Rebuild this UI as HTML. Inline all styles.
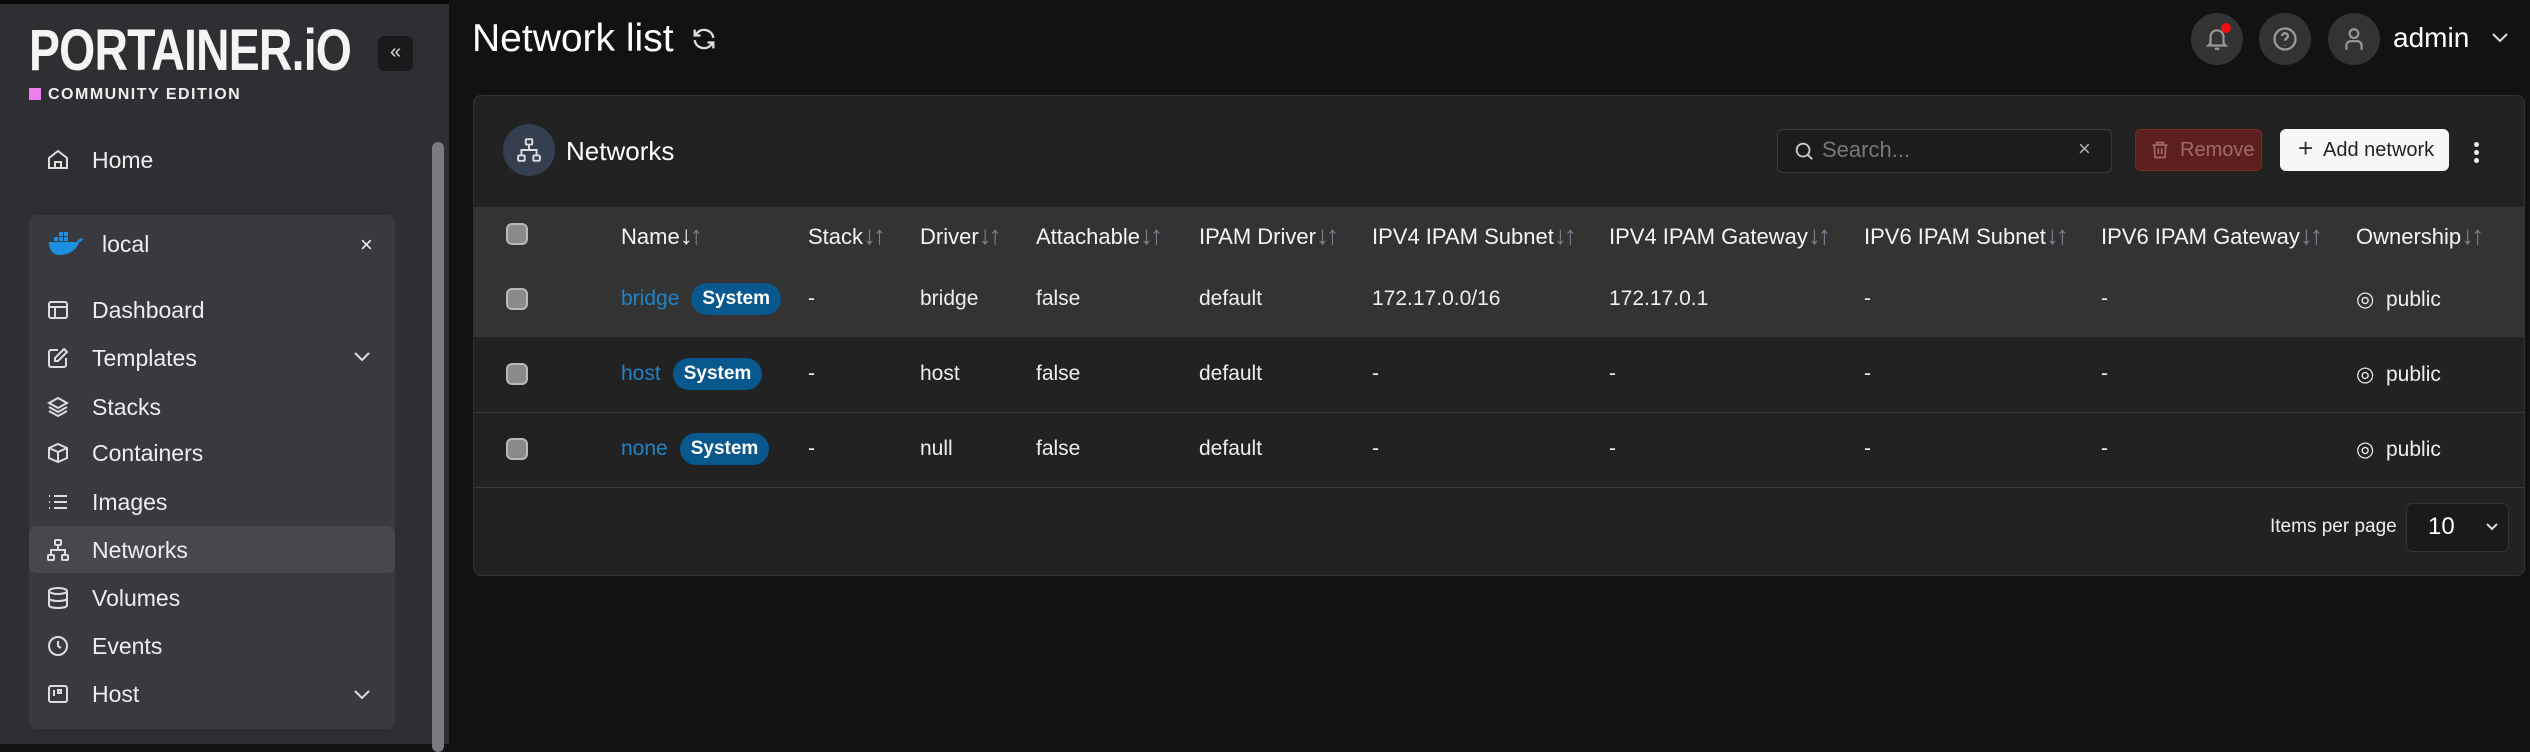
<!DOCTYPE html>
<html><head><meta charset="utf-8"><style>
*{box-sizing:border-box;margin:0;padding:0}
body{width:2530px;height:744px;background:#121212;font-family:"Liberation Sans",sans-serif;color:#f2f2f2;position:relative;overflow:hidden}
.abs{position:absolute}
#side{left:0;top:0;width:449px;height:744px;background:#2e2f33;border-top:4px solid #0a0a0a}
.logo{left:29px;top:22px;font-size:58px;line-height:1;font-weight:900;letter-spacing:-1px;color:#f4f4f2;transform:scaleX(0.8);transform-origin:left top;white-space:nowrap}
.ce{left:48px;top:86px;font-size:16px;font-weight:bold;letter-spacing:1.5px;color:#eee}
.pink{left:29px;top:88px;width:12px;height:12px;background:#f07ef0}
.coll{left:378px;top:36px;width:35px;height:35px;background:#1a1a1c;border-radius:6px;color:#ddd;font-size:20px;text-align:center;line-height:33px}
.scroll{left:432px;top:142px;width:12px;height:610px;background:#7a7b80;border-radius:6px}
.nav{left:92px;font-size:23px;color:#eee}
.ico{left:46px;width:24px;height:24px}
.env{left:29px;top:215px;width:366px;height:514px;background:#393a3f;border-radius:8px}
.hl{left:29px;top:526px;width:366px;height:47px;background:#47484d;border-radius:8px}
.card{left:473px;top:95px;width:2052px;height:481px;background:#222;border:1px solid #333;border-radius:8px}
.th{font-size:22px;color:#f4f4f4}
.ar{color:#7b8290;font-size:26px;letter-spacing:-3px}
.ar b{color:#f4f4f4;font-weight:normal}
.td{font-size:21px;color:#eee}
.cb{left:506px;width:22px;height:22px;background:#8a8a8a;border:2px solid #b9b9b9;border-radius:6px}
.nm{display:flex;align-items:center;gap:12px;font-size:21px;height:34px}
.badge{background:#08578d;color:#fff;font-weight:bold;font-size:19px;border-radius:16px;padding:0 11px;height:32px;line-height:32px}
.link{color:#1f84c8}
.circ{width:52px;height:52px;border-radius:50%;background:#333}
</style></head><body>
<div id="side" class="abs"></div>
<div class="abs logo">PORTAINER.iO</div>
<div class="abs pink"></div>
<div class="abs ce">COMMUNITY EDITION</div>
<div class="abs coll">«</div>
<div class="abs scroll"></div>
<svg class="abs ico" style="top:148px" viewBox="0 0 24 24" fill="none" stroke="#ddd" stroke-width="2"><path d="M3 10l9-7 9 7v10H3z M9 20v-6h6v6"/></svg>
<div class="abs nav" style="top:147px">Home</div>
<div class="abs env"></div>
<div class="abs hl"></div>
<svg class="abs" style="left:48px;top:230px" width="36" height="26" viewBox="0 0 36 26"><path d="M1 12h28c2-4 5-4 6-3-1 2-3 3-4 3-2 8-10 13-20 13C5 25 1 20 1 12z" fill="#1d8fe0"/><g fill="#1d8fe0"><rect x="6" y="7" width="4" height="4"/><rect x="11" y="7" width="4" height="4"/><rect x="16" y="7" width="4" height="4"/><rect x="11" y="2" width="4" height="4"/><rect x="16" y="2" width="4" height="4"/></g></svg>
<div class="abs nav" style="left:102px;top:231px">local</div>
<div class="abs" style="left:360px;top:232px;font-size:22px;color:#eee">×</div>
<svg class="abs ico" style="top:298px" viewBox="0 0 24 24" fill="none" stroke="#ddd" stroke-width="2"><rect x="3" y="4" width="18" height="16" rx="2"/><path d="M3 9h18M9 9v11"/></svg>
<div class="abs nav" style="top:297px">Dashboard</div>
<svg class="abs ico" style="top:346px" viewBox="0 0 24 24" fill="none" stroke="#ddd" stroke-width="2"><path d="M12 4H5a2 2 0 0 0-2 2v13a2 2 0 0 0 2 2h13a2 2 0 0 0 2-2v-7M18 3l3 3-9 9H9v-3z"/></svg>
<div class="abs nav" style="top:345px">Templates</div>
<svg class="abs" style="left:352px;top:350px" width="20" height="14" viewBox="0 0 20 14" fill="none" stroke="#ddd" stroke-width="2"><path d="M3 3l7 7 7-7"/></svg>
<svg class="abs ico" style="top:395px" viewBox="0 0 24 24" fill="none" stroke="#ddd" stroke-width="2"><path d="M12 3l9 5-9 5-9-5z M3 12l9 5 9-5 M3 16l9 5 9-5"/></svg>
<div class="abs nav" style="top:394px">Stacks</div>
<svg class="abs ico" style="top:441px" viewBox="0 0 24 24" fill="none" stroke="#ddd" stroke-width="2"><path d="M12 3l9 4v10l-9 4-9-4V7z M3 7l9 4 9-4 M12 11v10"/></svg>
<div class="abs nav" style="top:440px">Containers</div>
<svg class="abs ico" style="top:490px" viewBox="0 0 24 24" fill="none" stroke="#ddd" stroke-width="2"><path d="M8 6h13M8 12h13M8 18h13M3 6h1M3 12h1M3 18h1"/></svg>
<div class="abs nav" style="top:489px">Images</div>
<svg class="abs ico" style="top:538px" viewBox="0 0 24 24" fill="none" stroke="#ddd" stroke-width="2"><rect x="9" y="2" width="6" height="5" rx="1"/><rect x="2" y="17" width="6" height="5" rx="1"/><rect x="16" y="17" width="6" height="5" rx="1"/><path d="M12 7v5M5 17v-5h14v5"/></svg>
<div class="abs nav" style="top:537px">Networks</div>
<svg class="abs ico" style="top:586px" viewBox="0 0 24 24" fill="none" stroke="#ddd" stroke-width="2"><ellipse cx="12" cy="5" rx="9" ry="3"/><path d="M3 5v14c0 2 4 3 9 3s9-1 9-3V5M3 12c0 2 4 3 9 3s9-1 9-3"/></svg>
<div class="abs nav" style="top:585px">Volumes</div>
<svg class="abs ico" style="top:634px" viewBox="0 0 24 24" fill="none" stroke="#ddd" stroke-width="2"><circle cx="12" cy="12" r="9"/><path d="M12 7v5l3 2"/></svg>
<div class="abs nav" style="top:633px">Events</div>
<svg class="abs ico" style="top:682px" viewBox="0 0 24 24" fill="none" stroke="#ddd" stroke-width="2"><rect x="3" y="4" width="18" height="16" rx="2"/><path d="M8 8v6M12 8h3v3h-3z"/></svg>
<div class="abs nav" style="top:681px">Host</div>
<svg class="abs" style="left:352px;top:688px" width="20" height="14" viewBox="0 0 20 14" fill="none" stroke="#ddd" stroke-width="2"><path d="M3 3l7 7 7-7"/></svg>

<div class="abs" style="left:472px;top:17px;font-size:39px;color:#fff">Network list</div>
<svg class="abs" style="left:690px;top:25px" width="28" height="28" viewBox="0 0 24 24" fill="none" stroke="#ddd" stroke-width="2"><path d="M20 11a8 8 0 0 0-14-4L4 9M4 4v5h5M4 13a8 8 0 0 0 14 4l2-2M20 20v-5h-5"/></svg>
<div class="abs circ" style="left:2191px;top:13px"></div>
<svg class="abs" style="left:2204px;top:26px" width="26" height="26" viewBox="0 0 24 24" fill="none" stroke="#999" stroke-width="2"><path d="M6 16V10a6 6 0 0 1 12 0v6l2 2H4z M10 21h4"/></svg>
<div class="abs" style="left:2221px;top:23px;width:10px;height:10px;border-radius:50%;background:#f01010"></div>
<div class="abs circ" style="left:2259px;top:13px"></div>
<svg class="abs" style="left:2271px;top:25px" width="28" height="28" viewBox="0 0 24 24" fill="none" stroke="#999" stroke-width="2"><circle cx="12" cy="12" r="9"/><path d="M9.5 9.5a2.5 2.5 0 0 1 5 0c0 2-2.5 2-2.5 4M12 17v.5"/></svg>
<div class="abs circ" style="left:2328px;top:13px"></div>
<svg class="abs" style="left:2341px;top:26px" width="26" height="26" viewBox="0 0 24 24" fill="none" stroke="#999" stroke-width="2"><circle cx="12" cy="7" r="4"/><path d="M5 22v-4a4 4 0 0 1 4-4h6a4 4 0 0 1 4 4v4"/></svg>
<div class="abs" style="left:2393px;top:22px;font-size:28px;color:#fff">admin</div>
<svg class="abs" style="left:2490px;top:30px" width="20" height="16" viewBox="0 0 20 16" fill="none" stroke="#ddd" stroke-width="2"><path d="M3 4l7 7 7-7"/></svg>

<div class="abs card"></div>
<div class="abs circ" style="left:503px;top:124px;background:#34404f"></div>
<svg class="abs" style="left:516px;top:137px" width="26" height="26" viewBox="0 0 24 24" fill="none" stroke="#ddd" stroke-width="1.8"><rect x="9" y="2" width="6" height="5" rx="1"/><rect x="2" y="17" width="6" height="5" rx="1"/><rect x="16" y="17" width="6" height="5" rx="1"/><path d="M12 7v5M5 17v-5h14v5"/></svg>
<div class="abs" style="left:566px;top:136px;font-size:26px;color:#fff">Networks</div>
<div class="abs" style="left:1777px;top:129px;width:335px;height:44px;border:1px solid #3a3a3a;border-radius:6px;background:#1c1c1c"></div>
<svg class="abs" style="left:1793px;top:140px" width="22" height="22" viewBox="0 0 24 24" fill="none" stroke="#ccc" stroke-width="2"><circle cx="11" cy="11" r="7"/><path d="M16 16l5 5"/></svg>
<div class="abs" style="left:1822px;top:137px;font-size:22px;color:#777">Search...</div>
<div class="abs" style="left:2078px;top:136px;font-size:22px;color:#aaa">×</div>
<div class="abs" style="left:2135px;top:129px;width:127px;height:42px;background:#5c1f1d;border:1px solid #7a2a27;border-radius:6px"></div>
<svg class="abs" style="left:2150px;top:139px" width="20" height="22" viewBox="0 0 24 24" fill="none" stroke="#a06a66" stroke-width="2"><path d="M3 6h18M8 6V3h8v3M5 6l1 15h12l1-15M10 10v7M14 10v7"/></svg>
<div class="abs" style="left:2180px;top:139px;font-size:20px;color:#a06a66">Remove</div>
<div class="abs" style="left:2280px;top:129px;width:169px;height:42px;background:#f7f7f5;border-radius:6px"></div>
<div class="abs" style="left:2298px;top:133px;font-size:26px;color:#333">+</div>
<div class="abs" style="left:2323px;top:139px;font-size:20px;color:#222">Add network</div>
<div class="abs" style="left:2474px;top:142px;width:5px;height:5px;background:#eee;border-radius:50%"></div>
<div class="abs" style="left:2474px;top:150px;width:5px;height:5px;background:#eee;border-radius:50%"></div>
<div class="abs" style="left:2474px;top:158px;width:5px;height:5px;background:#eee;border-radius:50%"></div>

<div class="abs" style="left:474px;top:207px;width:2050px;height:130px;background:#333"></div>
<div class="abs" style="left:474px;top:412px;width:2050px;height:1px;background:#3a3a3a"></div>
<div class="abs" style="left:474px;top:487px;width:2050px;height:1px;background:#3a3a3a"></div>

<div class="abs cb" style="top:223px"></div>
<div class="abs cb" style="top:288px"></div>
<div class="abs cb" style="top:363px"></div>
<div class="abs cb" style="top:438px"></div>

<div class="abs th" style="left:621px;top:220px">Name<span class="ar"><b>↓</b>↑</span></div>
<div class="abs th" style="left:808px;top:220px">Stack<span class="ar">↓↑</span></div>
<div class="abs th" style="left:920px;top:220px">Driver<span class="ar">↓↑</span></div>
<div class="abs th" style="left:1036px;top:220px">Attachable<span class="ar">↓↑</span></div>
<div class="abs th" style="left:1199px;top:220px">IPAM Driver<span class="ar">↓↑</span></div>
<div class="abs th" style="left:1372px;top:220px">IPV4 IPAM Subnet<span class="ar">↓↑</span></div>
<div class="abs th" style="left:1609px;top:220px">IPV4 IPAM Gateway<span class="ar">↓↑</span></div>
<div class="abs th" style="left:1864px;top:220px">IPV6 IPAM Subnet<span class="ar">↓↑</span></div>
<div class="abs th" style="left:2101px;top:220px">IPV6 IPAM Gateway<span class="ar">↓↑</span></div>
<div class="abs th" style="left:2356px;top:220px">Ownership<span class="ar">↓↑</span></div>

<div class="abs nm" style="left:621px;top:282px"><span class="link">bridge</span><span class="badge">System</span></div>
<div class="abs nm" style="left:621px;top:357px"><span class="link">host</span><span class="badge">System</span></div>
<div class="abs nm" style="left:621px;top:432px"><span class="link">none</span><span class="badge">System</span></div>

<div class="abs td" style="left:808px;top:287px">-</div><div class="abs td" style="left:920px;top:287px">bridge</div><div class="abs td" style="left:1036px;top:287px">false</div><div class="abs td" style="left:1199px;top:287px">default</div><div class="abs td" style="left:1372px;top:287px">172.17.0.0/16</div><div class="abs td" style="left:1609px;top:287px">172.17.0.1</div><div class="abs td" style="left:1864px;top:287px">-</div><div class="abs td" style="left:2101px;top:287px">-</div>
<div class="abs td" style="left:808px;top:362px">-</div><div class="abs td" style="left:920px;top:362px">host</div><div class="abs td" style="left:1036px;top:362px">false</div><div class="abs td" style="left:1199px;top:362px">default</div><div class="abs td" style="left:1372px;top:362px">-</div><div class="abs td" style="left:1609px;top:362px">-</div><div class="abs td" style="left:1864px;top:362px">-</div><div class="abs td" style="left:2101px;top:362px">-</div>
<div class="abs td" style="left:808px;top:437px">-</div><div class="abs td" style="left:920px;top:437px">null</div><div class="abs td" style="left:1036px;top:437px">false</div><div class="abs td" style="left:1199px;top:437px">default</div><div class="abs td" style="left:1372px;top:437px">-</div><div class="abs td" style="left:1609px;top:437px">-</div><div class="abs td" style="left:1864px;top:437px">-</div><div class="abs td" style="left:2101px;top:437px">-</div>

<div class="abs td" style="left:2356px;top:287px">◎&nbsp; public</div>
<div class="abs td" style="left:2356px;top:362px">◎&nbsp; public</div>
<div class="abs td" style="left:2356px;top:437px">◎&nbsp; public</div>

<div class="abs" style="left:2270px;top:516px;font-size:19px;color:#eee">Items per page</div>
<div class="abs" style="left:2406px;top:503px;width:103px;height:49px;background:#1a1a1a;border:1px solid #333;border-radius:6px"></div>
<div class="abs" style="left:2428px;top:513px;font-size:24px;color:#fff">10</div>
<svg class="abs" style="left:2484px;top:520px" width="16" height="14" viewBox="0 0 16 14" fill="none" stroke="#ddd" stroke-width="2"><path d="M3 4l5 5 5-5"/></svg>
</body></html>
